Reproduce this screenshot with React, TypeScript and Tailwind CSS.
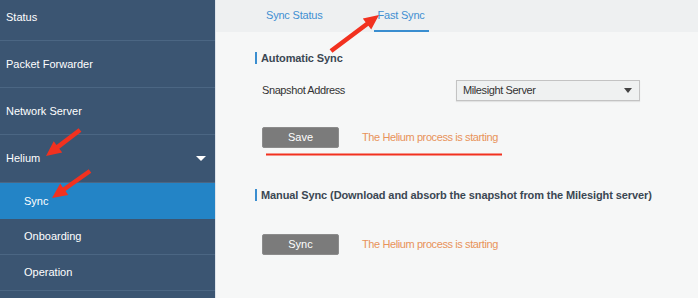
import React from "react";

const font = { fontFamily: '"Liberation Sans", Arial, sans-serif' };

type Pt = [number, number];

function arrowPoints(tail: Pt, tip: Pt, shaft = 4.5, headLen = 15, headW = 14) {
  const dx = tip[0] - tail[0];
  const dy = tip[1] - tail[1];
  const len = Math.hypot(dx, dy);
  const ux = dx / len;
  const uy = dy / len;
  const nx = -uy;
  const ny = ux;
  const bx = tip[0] - ux * headLen;
  const by = tip[1] - uy * headLen;
  const p = (x: number, y: number) => `${x.toFixed(1)},${y.toFixed(1)}`;
  return [
    p(tail[0] + nx * shaft / 2, tail[1] + ny * shaft / 2),
    p(bx + nx * shaft / 2, by + ny * shaft / 2),
    p(bx + nx * headW / 2, by + ny * headW / 2),
    p(tip[0], tip[1]),
    p(bx - nx * headW / 2, by - ny * headW / 2),
    p(bx - nx * shaft / 2, by - ny * shaft / 2),
    p(tail[0] - nx * shaft / 2, tail[1] - ny * shaft / 2),
  ].join(" ");
}

const arrows: [Pt, Pt][] = [
  [[331, 51], [379, 15]],
  [[80, 130], [46, 156]],
  [[90, 171], [52, 198]],
];

function SideItem({ label, caret, tall }: { label: string; caret?: boolean; tall?: boolean }) {
  return (
    <div
      className={
        "flex items-center justify-between pl-[6px] pr-[8px] border-b border-[#4b6683] text-[11px] text-white " +
        (tall ? "h-[48px]" : "h-[47px]")
      }
    >
      <span>{label}</span>
      {caret && <span className="w-0 h-0 border-l-[5px] border-r-[5px] border-t-[5px] border-l-transparent border-r-transparent border-t-white mr-[1px]" />}
    </div>
  );
}

function SubItem({ label, active }: { label: string; active?: boolean }) {
  return (
    <div
      className={
        "h-[36px] flex items-center pl-[24px] text-[11px] text-white " +
        (active ? "bg-[#2384c6]" : "border-b border-[#4b6683]")
      }
    >
      {label}
    </div>
  );
}

function Heading({ children }: { children: React.ReactNode }) {
  return (
    <div className="flex items-center gap-[4px] text-[11px] font-bold text-[#3b4753] tracking-[-0.1px] whitespace-nowrap">
      <span className="w-[2px] h-[12px] bg-[#3a8ed0]" />
      <span>{children}</span>
    </div>
  );
}

function Action({ label }: { label: string }) {
  return (
    <div className="flex items-center">
      <button className="w-[77px] h-[21px] rounded-[2px] bg-[#7b7b7b] border border-[#8c8c8c] text-white text-[11px]">{label}</button>
      <span className="ml-[23px] text-[11px] tracking-[-0.4px] text-[#e8935a]">The Helium process is starting</span>
    </div>
  );
}

export default function App() {
  return (
    <div className="relative flex w-[698px] h-[298px] overflow-hidden bg-[#f6f7f7]" style={font}>
      <div className="w-[216px] shrink-0 bg-[#3b5572] border-r border-[#dde3ea] overflow-hidden">
        <div className="-mt-[6px]">
          <SideItem label="Status" />
          <SideItem label="Packet Forwarder" />
          <SideItem label="Network Server" />
          <SideItem label="Helium" caret tall />
          <SubItem label="Sync" active />
          <SubItem label="Onboarding" />
          <SubItem label="Operation" />
        </div>
      </div>

      <div className="flex-1 flex flex-col">
        <div className="h-[32px] bg-[#eef0f1] flex pl-[50px] text-[11px] text-[#3f8fd2] whitespace-nowrap">
          <div className="pt-[7px] tracking-[-0.2px]">Sync Status</div>
          <div className="ml-[51px] w-[55px] pl-[4px] pt-[7px] border-b-2 border-[#3a8ed0] tracking-[-0.2px]">Fast Sync</div>
        </div>

        <div className="pl-[39px] pt-[18px]">
          <Heading>Automatic Sync</Heading>
          <div className="flex items-center mt-[13px] pl-[7px] text-[11px] text-[#333]">
            <span className="w-[194px] tracking-[-0.4px]">Snapshot Address</span>
            <div className="w-[184px] h-[21px] border border-[#c3c3c3] bg-[#eff1f1] flex items-center justify-between pl-[6px] pr-[7px] shadow-[0_1px_1px_rgba(0,0,0,0.08)]">
              <span className="tracking-[-0.4px]">Milesight Server</span>
              <span className="w-0 h-0 border-l-[4px] border-r-[4px] border-t-[5px] border-l-transparent border-r-transparent border-t-[#444]" />
            </div>
          </div>
          <div className="mt-[26px] pl-[7px]">
            <Action label="Save" />
          </div>
          <div className="mt-[39px]">
            <Heading>Manual Sync (Download and absorb the snapshot from the Milesight server)</Heading>
          </div>
          <div className="mt-[31px] pl-[7px]">
            <Action label="Sync" />
          </div>
        </div>
      </div>

      <svg className="absolute inset-0 pointer-events-none" width="698" height="298">
        {arrows.map(([a, b], i) => (
          <polygon key={i} points={arrowPoints(a, b)} fill="#f2311f" />
        ))}
        <line x1="266" y1="154.5" x2="502" y2="154.5" stroke="#f2311f" strokeWidth="2" />
      </svg>
    </div>
  );
}
